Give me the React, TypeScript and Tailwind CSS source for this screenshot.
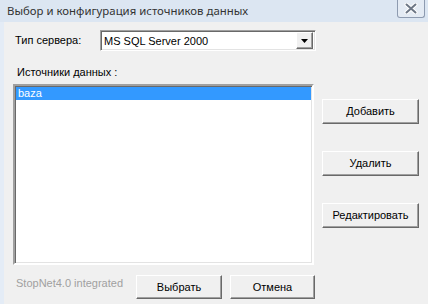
import React from "react";

const btn =
  "flex items-center justify-center bg-[#f0f0f0] border border-t-white border-l-white border-b-[#696969] border-r-[#696969] shadow-[inset_-1px_-1px_0_#a0a0a0] text-[11px] text-black";

export default function App() {
  return (
    <div
      className="w-[428px] h-[304px] bg-[#f0f0f0] flex flex-col overflow-hidden"
      style={{ fontFamily: '"Liberation Sans", Arial, sans-serif' }}
    >
      {/* Title bar */}
      <div className="h-[22px] bg-[#dce6f2] flex items-start relative shrink-0">
        <div
          className="ml-[7px] mt-[3px] text-[11.4px] leading-[15px] text-[#333]"
          style={{ fontFamily: '"Noto Sans", "Open Sans", sans-serif' }}
        >
          Выбор и конфигурация источников данных
        </div>
        <div className="absolute left-[397px] top-0 w-[28px] h-[18px] border border-t-0 border-[#8e9bb0] rounded-b-[3px] bg-[#e4ebf4] flex items-center justify-center">
          <svg width="14" height="11" viewBox="0 0 14 11">
            <path d="M2.5 1.5 L11.5 9.5 M11.5 1.5 L2.5 9.5" stroke="#ffffff" strokeWidth="4" strokeLinecap="round" />
            <path d="M2.5 1.5 L11.5 9.5 M11.5 1.5 L2.5 9.5" stroke="#6d7786" strokeWidth="2" strokeLinecap="round" />
          </svg>
        </div>
      </div>

      <div className="flex flex-1">
        {/* left frame strip */}
        <div className="w-[4px] bg-[#e4ecf6] shrink-0" />

        <div className="flex flex-col flex-1">
          {/* server type row */}
          <div className="flex items-center mt-[8px]">
            <div className="ml-[11px] w-[85px] text-[11px] text-black leading-[13px]">Тип сервера:</div>
            <div className="w-[216px] h-[21px] bg-white border border-t-[#a0a0a0] border-l-[#a0a0a0] border-b-white border-r-white shadow-[inset_1px_1px_0_#696969,inset_-1px_-1px_0_#e3e3e3] flex items-center">
              <div className="ml-[3px] flex-1 text-[11px] text-black leading-[14px]">MS SQL Server 2000</div>
              <div className={"w-[17px] h-[17px] mr-[2px] " + btn}>
                <svg width="7" height="4" viewBox="0 0 7 4">
                  <path d="M0 0 H7 L3.5 4 Z" fill="#000" />
                </svg>
              </div>
            </div>
          </div>

          <div className="ml-[13px] mt-[15px] text-[11px] leading-[13px] text-black">Источники данных :</div>

          {/* list + buttons */}
          <div className="flex mt-[5px]">
            <div className="ml-[9px] w-[301px] h-[181px] bg-white border-2 border-t-[#a0a0a0] border-l-[#a0a0a0] border-b-white border-r-white shadow-[inset_1px_1px_0_#696969,inset_-1px_-1px_0_#e3e3e3] p-[1px] pl-[1px]">
              <div className="h-[13px] bg-[#3399ff] text-white text-[11px] leading-[13px] pl-[2px]">baza</div>
            </div>
            <div className="ml-[8px] pt-[15px] flex flex-col gap-[27px]">
              <div className={"w-[97px] h-[25px] " + btn}>Добавить</div>
              <div className={"w-[97px] h-[25px] " + btn}>Удалить</div>
              <div className={"w-[97px] h-[25px] " + btn}>Редактировать</div>
            </div>
          </div>

          {/* bottom row */}
          <div className="flex items-center mt-[10px]">
            <div className="ml-[12px] w-[120px] text-[11px] leading-[13px] text-[#a0a0a0] -mt-[8px]">StopNet4.0 integrated</div>
            <div className={"w-[86px] h-[24px] " + btn}>Выбрать</div>
            <div className={"ml-[8px] w-[85px] h-[24px] " + btn}>Отмена</div>
          </div>
        </div>
      </div>
    </div>
  );
}
